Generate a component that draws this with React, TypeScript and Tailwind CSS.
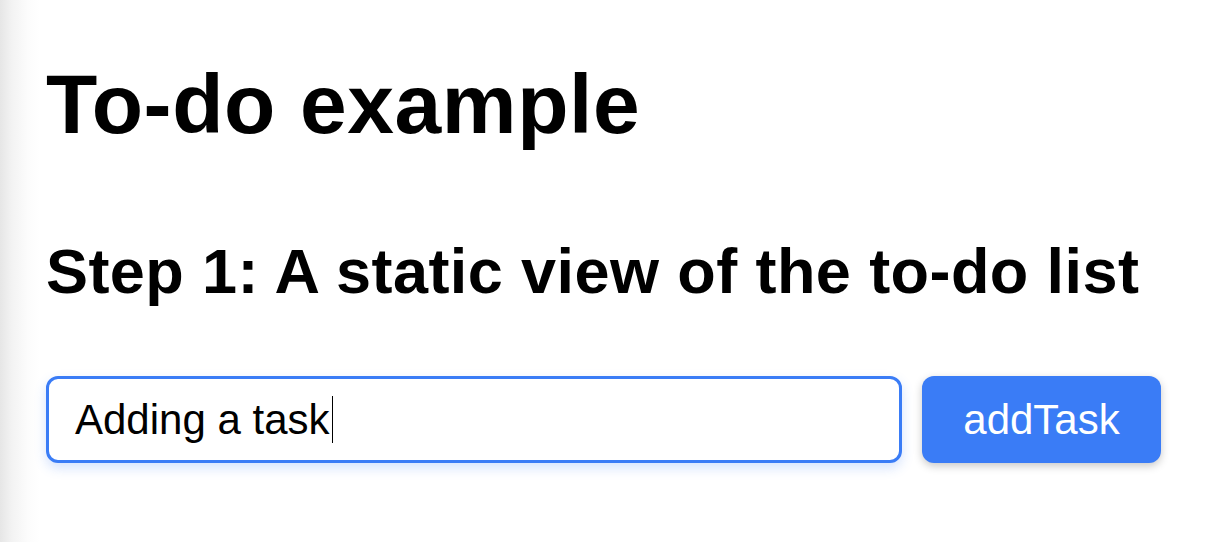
import React from "react";

export default function App() {
  return (
    <div
      className="min-h-[542px] w-full bg-[linear-gradient(to_right,#e6e6e6_0px,#f3f3f3_12px,#fcfcfc_28px,#ffffff_40px)] pl-[46px] pt-[56px] text-black"
      style={{ fontFamily: '"Liberation Sans", Arial, Helvetica, sans-serif' }}
    >
      <h1 className="text-[84px] font-bold leading-[96px] tracking-[0.6px]">To-do example</h1>
      <h2 className="mt-[83px] text-[63px] font-bold leading-[72px] tracking-[0.42px]">
        Step 1: A static view of the to-do list
      </h2>
      <div className="mt-[69px] flex gap-[20px]">
        <div className="flex h-[87px] w-[856px] items-center rounded-[12px] border-[3px] border-[#3a7cf6] bg-white pl-[26px] shadow-[0_5px_12px_rgba(58,124,246,0.22)]">
          <span className="text-[42px] leading-none">Adding a task</span>
          <span className="ml-[2px] h-[47px] w-[1.5px] bg-black" />
        </div>
        <button className="h-[87px] w-[239px] rounded-[12px] bg-[#3a7cf6] text-[42px] leading-none text-white shadow-[0_3px_8px_rgba(0,0,0,0.22)]">
          addTask
        </button>
      </div>
    </div>
  );
}
